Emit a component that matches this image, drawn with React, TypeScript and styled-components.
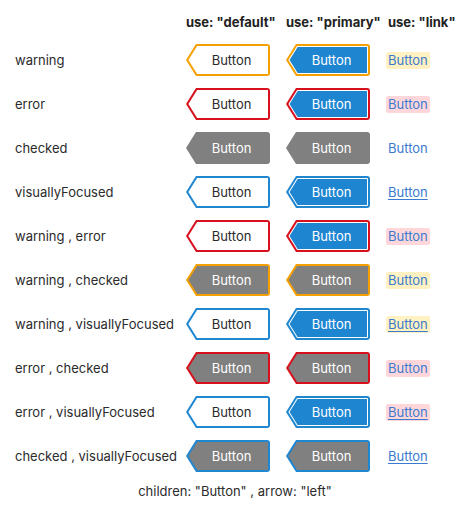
import styled, { createGlobalStyle } from 'styled-components';

/** ---- palette ---- */
const c = {
  text: '#2b2b2b',
  orange: '#f4a000',
  red: '#d7101d',
  blue: '#1f86d0',
  fill: '#1e86d1',
  gray: '#808080',
  link: '#3a7bd0',
  linkWarn: '#fff1c2',
  linkError: '#ffd7da',
};

type State = {
  label: string;
  warning?: boolean;
  error?: boolean;
  checked?: boolean;
  focused?: boolean;
};

const rows: State[] = [
  { label: 'warning', warning: true },
  { label: 'error', error: true },
  { label: 'checked', checked: true },
  { label: 'visuallyFocused', focused: true },
  { label: 'warning , error', warning: true, error: true },
  { label: 'warning , checked', warning: true, checked: true },
  { label: 'warning , visuallyFocused', warning: true, focused: true },
  { label: 'error , checked', error: true, checked: true },
  { label: 'error , visuallyFocused', error: true, focused: true },
  { label: 'checked , visuallyFocused', checked: true, focused: true },
];

// arrow polygon for a layer inset by t px inside the outer shape
const arrowClip = (t: number) => {
  const top = (10 - 0.445 * t).toFixed(2);
  const tip = (0.18 * t).toFixed(2);
  return `polygon(${top}px 0, 100% 0, 100% 100%, ${top}px 100%, ${tip}px 50%)`;
};

const edgeOf = (s: State) =>
  s.focused ? c.blue : s.error ? c.red : s.warning ? c.orange : null;

const DefaultButton = ({ s }: { s: State }) => {
  const fill = s.checked ? c.gray : '#fff';
  return (
    <ArrowEdge $color={edgeOf(s) ?? fill}>
      <ArrowFace $fill={fill} $ink={s.checked ? '#fff' : c.text} $inset={2}>
        Button
      </ArrowFace>
    </ArrowEdge>
  );
};

const PrimaryButton = ({ s }: { s: State }) => {
  const fill = s.checked ? c.gray : c.fill;
  const edge = edgeOf(s);
  const face = (
    <ArrowFace $fill={fill} $ink="#fff" $inset={edge && !s.checked ? 3 : 2}>
      Button
    </ArrowFace>
  );
  return (
    <ArrowEdge $color={edge ?? fill}>
      {edge && !s.checked ? <ArrowRing>{face}</ArrowRing> : face}
    </ArrowEdge>
  );
};

const LinkButton = ({ s }: { s: State }) => (
  <LinkText
    $bg={s.error ? c.linkError : s.warning ? c.linkWarn : 'transparent'}
    $underline={!!s.focused}
  >
    Button
  </LinkText>
);

export default function App() {
  return (
    <>
      <GlobalStyle />
      <Page>
        <Table>
          <HeadCell />
          <HeadCell>use: "default"</HeadCell>
          <HeadCell>use: "primary"</HeadCell>
          <HeadCell>use: "link"</HeadCell>
          {rows.map((s) => (
            <Row key={s.label}>
              <Label>{s.label}</Label>
              <Cell>
                <DefaultButton s={s} />
              </Cell>
              <Cell>
                <PrimaryButton s={s} />
              </Cell>
              <Cell>
                <LinkButton s={s} />
              </Cell>
            </Row>
          ))}
        </Table>
        <Footer>children: "Button" , arrow: "left"</Footer>
      </Page>
    </>
  );
}

/* ---------- styles ---------- */
const GlobalStyle = createGlobalStyle`
  body {
    margin: 0;
    background: #fff;
    font-family: Inter, "Noto Sans", sans-serif;
    color: ${c.text};
  }
`;

const Page = styled.main`
  width: 470px;
  padding: 14px 0 0 15px;
  box-sizing: border-box;
`;

const Table = styled.div`
  display: grid;
  grid-template-columns: 171px 100px 102px auto;
  grid-auto-rows: 44px;
  grid-template-rows: 24px;
`;

const Row = styled.div`
  display: contents;
`;

const HeadCell = styled.div`
  font-size: 13px;
  font-weight: 700;
  line-height: 16px;
  color: #222;
  white-space: nowrap;
`;

const Label = styled.div`
  display: flex;
  align-items: center;
  font-size: 13px;
  white-space: nowrap;
`;

const Cell = styled.div`
  display: flex;
  align-items: center;
`;

const ArrowEdge = styled.span<{ $color: string }>`
  display: flex;
  width: 84px;
  height: 32px;
  padding: 2px;
  box-sizing: border-box;
  background: ${(p) => p.$color};
  clip-path: ${arrowClip(0)};
  border-radius: 0 3px 3px 0;
`;

const ArrowRing = styled.span`
  display: flex;
  flex: 1;
  padding: 1px;
  background: #fff;
  clip-path: ${arrowClip(2)};
  border-radius: 0 1px 1px 0;
`;

const ArrowFace = styled.span<{ $fill: string; $ink: string; $inset: number }>`
  display: flex;
  flex: 1;
  align-items: center;
  justify-content: center;
  padding-left: 7px;
  font-size: 13px;
  color: ${(p) => p.$ink};
  background: ${(p) => p.$fill};
  clip-path: ${(p) => arrowClip(p.$inset)};
`;

const LinkText = styled.span<{ $bg: string; $underline: boolean }>`
  padding: 0 2px;
  margin-left: -2px;
  font-size: 13px;
  line-height: 17px;
  border-radius: 2px;
  color: ${c.link};
  background: ${(p) => p.$bg};
  text-decoration: ${(p) => (p.$underline ? 'underline' : 'none')};
  text-underline-offset: 2px;
`;

const Footer = styled.div`
  margin: 5px 0 0 -15px;
  font-size: 13px;
  text-align: center;
`;
